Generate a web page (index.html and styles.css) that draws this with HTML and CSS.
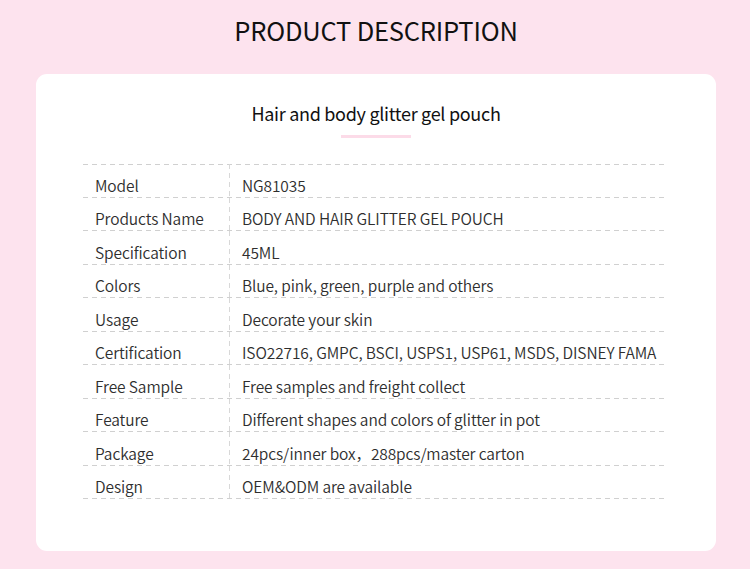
FILE: index.html
```html
<!DOCTYPE html>
<html>
<head>
<meta charset="utf-8">
<link rel="stylesheet" href="styles.css">
</head>
<body>
<div class="page">
  <h1 class="title">PRODUCT DESCRIPTION</h1>
  <div class="card">
    <h2 class="subtitle">Hair and body glitter gel pouch</h2>
    <div class="bar"></div>
    <div class="table">
      <div class="row"><div class="label">Model</div><div class="value">NG81035</div></div>
      <div class="row"><div class="label">Products Name</div><div class="value">BODY AND HAIR GLITTER GEL POUCH</div></div>
      <div class="row"><div class="label">Specification</div><div class="value">45ML</div></div>
      <div class="row"><div class="label">Colors</div><div class="value">Blue, pink, green, purple and others</div></div>
      <div class="row"><div class="label">Usage</div><div class="value">Decorate your skin</div></div>
      <div class="row"><div class="label">Certification</div><div class="value">ISO22716, GMPC, BSCI, USPS1, USP61, MSDS, DISNEY FAMA</div></div>
      <div class="row"><div class="label">Free Sample</div><div class="value">Free samples and freight collect</div></div>
      <div class="row"><div class="label">Feature</div><div class="value">Different shapes and colors of glitter in pot</div></div>
      <div class="row"><div class="label">Package</div><div class="value">24pcs/inner box，288pcs/master carton</div></div>
      <div class="row"><div class="label">Design</div><div class="value">OEM&amp;ODM are available</div></div>
    </div>
  </div>
</div>
</body>
</html>
```
FILE: styles.css
```css
html, body {
  margin: 0;
  padding: 0;
  background: #fde3ee;
}
body {
  font-family: "Noto Sans CJK SC", "Noto Sans", sans-serif;
  color: #222;
}
.page {
  width: 750px;
  height: 569px;
  padding: 0 34px 0 36px;
  box-sizing: border-box;
  display: flex;
  flex-direction: column;
}
.title {
  margin: 0;
  height: 74px;
  box-sizing: border-box;
  padding-top: 12px;
  text-align: center;
  font-size: 25.5px;
  font-weight: 400;
  letter-spacing: -0.2px;
  line-height: 36px;
  color: #111;
}
.card {
  background: #fff;
  border-radius: 11px;
  height: 477px;
  display: flex;
  flex-direction: column;
  align-items: center;
  padding-top: 24px;
  box-sizing: border-box;
}
.subtitle {
  margin: 0;
  font-size: 18px;
  font-weight: 400;
  letter-spacing: -0.3px;
  line-height: 30px;
  color: #111;
}
.bar {
  width: 70px;
  height: 3px;
  background: #fcdbe8;
  margin-top: 7px;
}
.table {
  margin-top: 26px;
  margin-left: -4px;
  width: 582px;
  background-image: repeating-linear-gradient(to right, #d0d0d0 0 5px, transparent 5px 9px);
  background-size: 100% 1px;
  background-repeat: no-repeat;
  background-position: top left;
}
.row {
  display: grid;
  grid-template-columns: 147px 1fr;
  height: 33.5px;
  font-size: 15.5px;
  font-weight: 350;
  letter-spacing: -0.1px;
  color: #2e2e2e;
  background-image: repeating-linear-gradient(to right, #d0d0d0 0 5px, transparent 5px 9px);
  background-size: 100% 1px;
  background-repeat: no-repeat;
  background-position: bottom left;
}
.label, .value {
  padding-top: 8px;
  box-sizing: border-box;
  height: 100%;
  display: flex;
  align-items: center;
  padding-left: 12px;
  white-space: nowrap;
}
.label {
  background-image: repeating-linear-gradient(to bottom, #d8d8d8 0 5px, transparent 5px 9px);
  background-size: 1px 100%;
  background-repeat: no-repeat;
  background-position: top right;
}
```
